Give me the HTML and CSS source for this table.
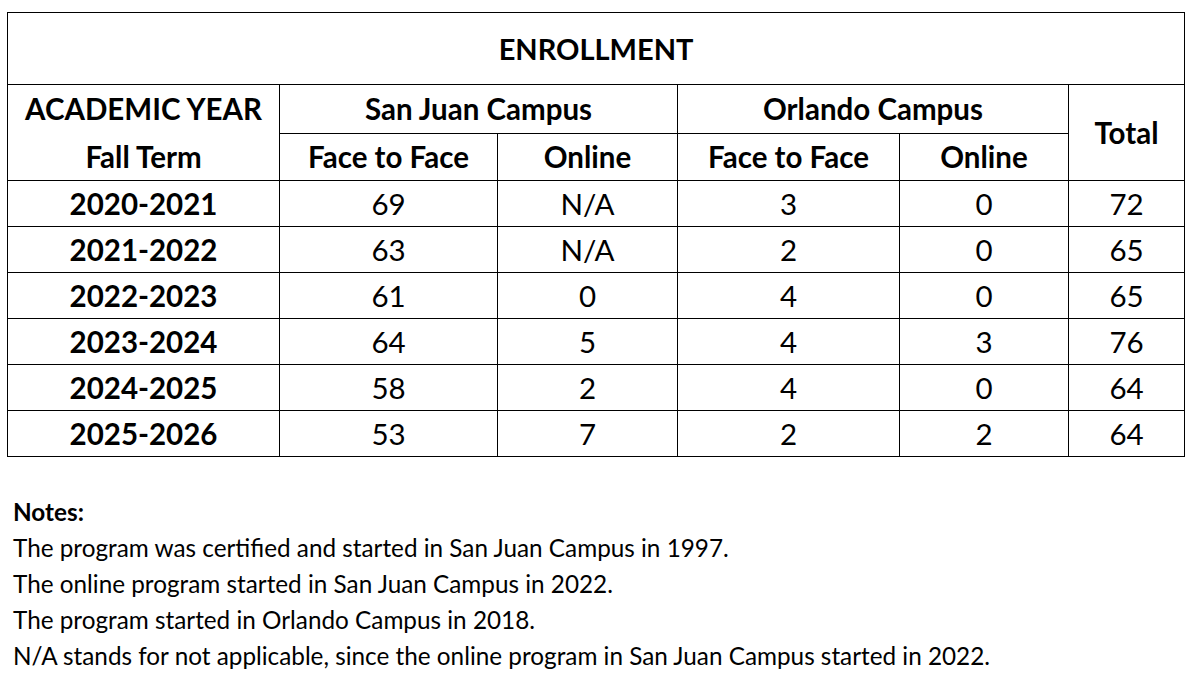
FILE: index.html
```html
<!DOCTYPE html>
<html>
<head>
<meta charset="utf-8">
<link rel="stylesheet" href="styles.css">
</head>
<body>
<div class="page">
  <table class="enroll">
    <colgroup>
      <col class="c1"><col class="c2"><col class="c3"><col class="c4"><col class="c5"><col class="c6">
    </colgroup>
    <tr class="title-row"><th colspan="6">ENROLLMENT</th></tr>
    <tr class="head1">
      <th class="year-top">ACADEMIC YEAR</th>
      <th colspan="2">San Juan Campus</th>
      <th colspan="2">Orlando Campus</th>
      <th rowspan="2" class="total">Total</th>
    </tr>
    <tr class="head2">
      <th class="year-bottom">Fall Term</th>
      <th>Face to Face</th>
      <th>Online</th>
      <th>Face to Face</th>
      <th>Online</th>
    </tr>
    <tr><th class="yr">2020-2021</th><td>69</td><td>N/A</td><td>3</td><td>0</td><td>72</td></tr>
    <tr><th class="yr">2021-2022</th><td>63</td><td>N/A</td><td>2</td><td>0</td><td>65</td></tr>
    <tr><th class="yr">2022-2023</th><td>61</td><td>0</td><td>4</td><td>0</td><td>65</td></tr>
    <tr><th class="yr">2023-2024</th><td>64</td><td>5</td><td>4</td><td>3</td><td>76</td></tr>
    <tr><th class="yr">2024-2025</th><td>58</td><td>2</td><td>4</td><td>0</td><td>64</td></tr>
    <tr><th class="yr">2025-2026</th><td>53</td><td>7</td><td>2</td><td>2</td><td>64</td></tr>
  </table>
  <div class="notes">
    <p class="notes-title">Notes:</p>
    <p>The program was certified and started in San Juan Campus in 1997.</p>
    <p>The online program started in San Juan Campus in 2022.</p>
    <p>The program started in Orlando Campus in 2018.</p>
    <p>N/A stands for not applicable, since the online program in San Juan Campus started in 2022.</p>
  </div>
</div>
</body>
</html>
```

FILE: styles.css
```css
html, body {
  margin: 0;
  padding: 0;
  background: #ffffff;
}
body {
  font-family: Lato, "Open Sans", sans-serif;
  color: #000000;
}
.page {
  padding: 12px 9px 0 7px;
}
.enroll {
  border-collapse: collapse;
  table-layout: fixed;
  width: 1177px;
}
.c1 { width: 272px; }
.c2 { width: 218px; }
.c3 { width: 180px; }
.c4 { width: 222px; }
.c5 { width: 169px; }
.c6 { width: 116px; }
.enroll th, .enroll td {
  border: 1px solid #000000;
  padding: 0;
  text-align: center;
  vertical-align: middle;
  font-size: 29.5px;
  line-height: 32px;
}
.enroll th { font-weight: 700; }
.enroll td { font-weight: 400; }
.title-row th {
  height: 71px;
  font-size: 29px;
}
.head1 th { height: 48px; }
.head2 th { height: 46px; }
.enroll .year-top { border-bottom: none; }
.enroll .year-bottom { border-top: none; }
.enroll tr:not(.title-row):not(.head1):not(.head2) > * { height: 45px; }
.notes {
  padding: 37px 0 0 6px;
}
.notes p {
  margin: 0;
  font-size: 24.3px;
  line-height: 36px;
}
.notes .notes-title { font-weight: 700; }
```
